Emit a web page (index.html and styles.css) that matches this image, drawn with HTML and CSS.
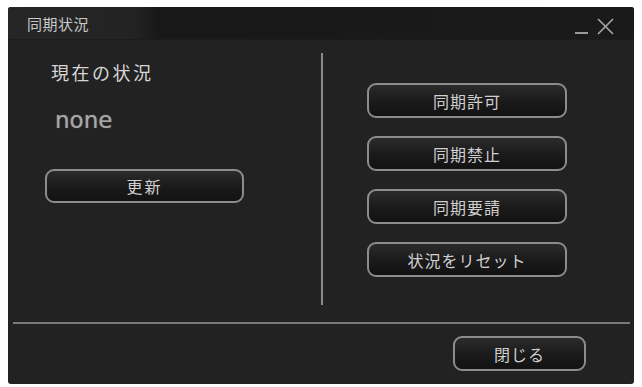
FILE: index.html
```html
<!DOCTYPE html>
<html lang="ja">
<head>
    <meta charset="UTF-8">
    <meta name="viewport" content="width=device-width, initial-scale=1.0">
    <title>同期状況</title>
    <link rel="stylesheet" href="styles.css">
</head>
<body>
    <div class="window">
        <div class="titlebar">
            <span class="title">同期状況</span>
            <div class="controls">
                <svg class="ctl" width="40" height="22" viewBox="0 0 40 22">
                    <line x1="1" y1="20" x2="14" y2="20" stroke="#9a9a9a" stroke-width="2"/>
                    <line x1="24" y1="6" x2="39" y2="21" stroke="#a8a8a8" stroke-width="1.6"/>
                    <line x1="39" y1="6" x2="24" y2="21" stroke="#a8a8a8" stroke-width="1.6"/>
                </svg>
            </div>
        </div>

        <div class="main">
            <div class="left">
                <div class="label">現在の状況</div>
                <div class="status">none</div>
                <button class="btn btn-refresh">更新</button>
            </div>
            <div class="divider"></div>
            <div class="right">
                <button class="btn">同期許可</button>
                <button class="btn">同期禁止</button>
                <button class="btn">同期要請</button>
                <button class="btn">状況をリセット</button>
            </div>
        </div>

        <div class="rule"></div>

        <div class="footer">
            <button class="btn btn-close">閉じる</button>
        </div>
    </div>
</body>
</html>
```

FILE: styles.css
```css
body {
    margin: 0;
    background-color: #fff;
    font-family: "Noto Sans CJK JP", "Noto Sans", sans-serif;
}

.window {
    margin: 7px 0 0 8px;
    width: 626px;
    height: 377px;
    background-color: #222;
    border-radius: 3px;
    display: flex;
    flex-direction: column;
    overflow: hidden;
}

.titlebar {
    height: 33px;
    display: flex;
    align-items: center;
    justify-content: space-between;
    background: linear-gradient(90deg, #262626 0%, #232323 20%, #181818 24%, #1a1a1a 100%);
    border-bottom: 1px solid #1c1c1c;
    box-sizing: border-box;
}

.title {
    margin-left: 19px;
    margin-top: 1px;
    font-size: 15px;
    color: #c8c8c8;
    letter-spacing: 0.5px;
}

.controls {
    margin-right: 20px;
    margin-top: 2px;
    display: flex;
}

.main {
    height: 282px;
    display: flex;
}

.left {
    width: 313px;
    display: flex;
    flex-direction: column;
}

.label {
    margin: 19px 0 0 43px;
    font-size: 18px;
    letter-spacing: 2.5px;
    color: #d6d6d6;
    line-height: 26px;
}

.status {
    margin: 20px 0 0 47px;
    font-family: "DejaVu Sans", sans-serif;
    font-size: 23px;
    color: #a6a6a6;
    line-height: 30px;
    text-shadow: 0 0 1px #888;
}

.divider {
    width: 2px;
    margin: 13px 0 17px 0;
    background-color: #8a8a8a;
}

.right {
    display: flex;
    flex-direction: column;
    gap: 18px;
    padding: 43px 0 0 44px;
}

.btn {
    width: 200px;
    height: 35px;
    box-sizing: border-box;
    border: 2px solid #8c8c8c;
    border-radius: 9px;
    background: linear-gradient(180deg, #2b2b2b 0%, #1a1a1a 55%, #121212 100%);
    color: #cfcfcf;
    font-family: "Noto Sans CJK JP", "Noto Sans", sans-serif;
    font-size: 16px;
    letter-spacing: 1px;
    padding: 0;
    line-height: 30px;
}

.btn-refresh {
    margin: 34px 0 0 37px;
    width: 199px;
    height: 34px;
    letter-spacing: 2px;
}

.rule {
    height: 2px;
    margin: 0 4px 0 5px;
    background-color: #7a7a7a;
}

.footer {
    flex: 1;
    display: flex;
    justify-content: flex-end;
    align-items: flex-start;
    padding: 12px 48px 0 0;
}

.btn-close {
    width: 133px;
    height: 35px;
    letter-spacing: 1px;
}
```
